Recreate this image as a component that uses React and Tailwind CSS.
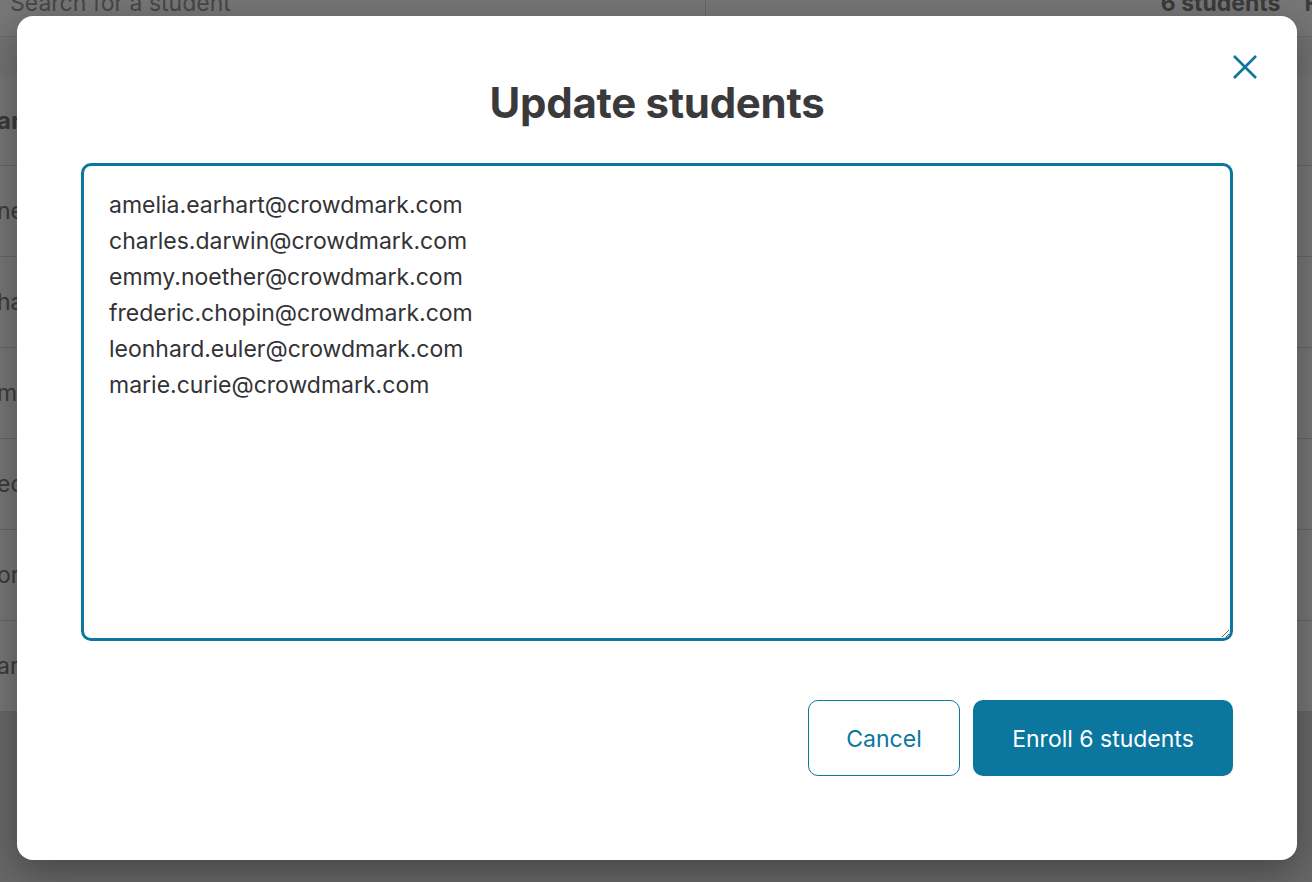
import React from "react";

const emails = [
  "amelia.earhart@crowdmark.com",
  "charles.darwin@crowdmark.com",
  "emmy.noether@crowdmark.com",
  "frederic.chopin@crowdmark.com",
  "leonhard.euler@crowdmark.com",
  "marie.curie@crowdmark.com",
].join("\n");

const rows = ["ne", "ha", "mn", "ec", "or", "ar"];

export default function App() {
  return (
    <div className="relative w-[1312px] h-[882px] overflow-hidden bg-[#d0d0d0] font-['Inter','Liberation_Sans',sans-serif]">
      {/* underlying page */}
      <div className="flex flex-col bg-[#efefef]">
        <div className="flex h-[37px] border-b border-[#d8d8d8]">
          <div className="shrink-0 w-[706px] flex items-start border-r border-[#cfcfcf]">
            <span className="-mt-[14px] pl-[10px] text-[23px] text-[#8e8e92]">Search for a student</span>
          </div>
          <div className="flex-1 flex items-start justify-end gap-6">
            <span className="-mt-[14px] text-[23px] font-bold text-[#777]">6 students</span>
            <span className="-mt-[14px] -mr-[6px] text-[23px] font-bold text-[#777]">F</span>
          </div>
        </div>
        <div className="h-[39px] bg-[#e6e6e6]" />
        <div className="h-[90px] flex items-center border-b border-[#cfcfcf]">
          <span className="-ml-[3px] text-[24px] font-bold text-[#777]">ar</span>
        </div>
        {rows.map((r) => (
          <div key={r} className="h-[91px] flex items-center border-b border-[#cfcfcf]">
            <span className="-ml-[3px] text-[23px] text-[#777]">{r}</span>
          </div>
        ))}
      </div>

      {/* overlay */}
      <div className="absolute inset-0 bg-black/50 pt-[16px] pl-[17px]">
        <div className="relative w-[1280px] h-[844px] bg-white rounded-[16px] shadow-[0_12px_40px_rgba(0,0,0,0.35)] flex flex-col px-[64px] pt-[63px]">
          <button className="absolute top-[38px] right-[39px] w-[26px] h-[26px] flex items-center justify-center text-[#0b779e]">
            <svg width="26" height="26" viewBox="0 0 26 26" fill="none" stroke="currentColor" strokeWidth="2.6" strokeLinecap="butt">
              <path d="M2 2 L24 24 M24 2 L2 24" />
            </svg>
          </button>
          <h2 className="text-center text-[42px] leading-[48px] font-bold text-[#3a3a3c] tracking-[-0.3px]">
            Update students
          </h2>
          <textarea
            className="mt-[36px] h-[478px] w-full rounded-[10px] border-[3px] border-[#0b779e] outline-none pl-[25px] pr-[24px] pt-[21px] text-[23px] leading-[36px] text-[#333336] resize-y font-['Inter','Liberation_Sans',sans-serif]"
            defaultValue={emails}
          />
          <div className="mt-[59px] flex justify-end gap-[13px]">
            <button className="w-[152px] h-[76px] pt-[3px] rounded-[10px] border border-[#0b779e] bg-white text-[23px] text-[#0b779e]">
              Cancel
            </button>
            <button className="w-[260px] h-[76px] pt-[3px] rounded-[10px] bg-[#0b779e] text-[23px] text-white">
              Enroll 6 students
            </button>
          </div>
        </div>
      </div>
    </div>
  );
}
